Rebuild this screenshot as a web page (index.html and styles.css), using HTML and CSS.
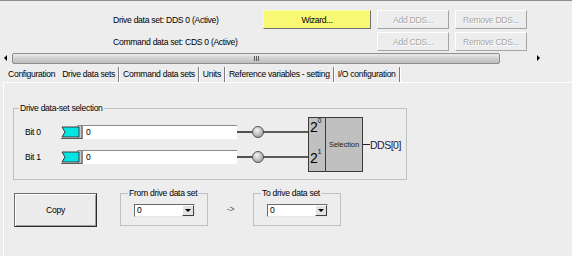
FILE: index.html
```html
<!DOCTYPE html>
<html lang="en">
<head>
<meta charset="UTF-8" />
<meta name="viewport" content="width=device-width, initial-scale=1" />
<title>Drive data sets</title>
<link rel="stylesheet" href="styles.css">
</head>
<body>
<div class="header">
  <div class="hdr-row">
    <span class="hdr-label">Drive data set: DDS 0 (Active)</span>
    <button class="btn wizard">Wizard...</button>
    <button class="btn" disabled>Add DDS...</button>
    <button class="btn" disabled>Remove DDS...</button>
  </div>
  <div class="hdr-row">
    <span class="hdr-label">Command data set: CDS 0 (Active)</span>
    <span></span>
    <button class="btn" disabled>Add CDS...</button>
    <button class="btn" disabled>Remove CDS...</button>
  </div>
</div>

<div class="hscroll">
  <span class="scroll-arrow left"></span>
  <div class="track"><div class="thumb"><span class="grip"></span></div></div>
  <span class="scroll-arrow right"></span>
</div>

<ul class="tabs">
  <li>Configuration</li>
  <li class="active">Drive data sets</li>
  <li>Command data sets</li>
  <li>Units</li>
  <li>Reference variables - setting</li>
  <li>I/O configuration</li>
</ul>

<div class="page">
  <fieldset class="group sel-group">
    <legend>Drive data-set selection</legend>
    <div class="sel-body">
      <div class="bits">
        <div class="bit">
          <span class="bit-label">Bit 0</span>
          <svg class="socket" viewBox="0 0 22 14">
            <rect x="18" y="0.5" width="3.5" height="13" fill="#c8c8c8" stroke="#8a8a8a" stroke-width="1"/>
            <polygon points="2,2 19,2 19,12 2,12 5,7" fill="#00e4e4" stroke="#3c3c3c" stroke-width="1"/>
            <line x1="1" y1="13.5" x2="22" y2="13.5" stroke="#5a5a5a" stroke-width="1"/>
          </svg>
          <span class="bit-value">0</span>
          <svg class="wire" viewBox="0 0 71 14">
            <defs>
              <radialGradient id="knob0" cx="0.4" cy="0.35" r="0.7">
                <stop offset="0" stop-color="#f4f4f4"/>
                <stop offset="1" stop-color="#9a9a9a"/>
              </radialGradient>
            </defs>
            <line x1="0" y1="7" x2="15" y2="7" stroke="#2a2a2a" stroke-width="1.6"/>
            <circle cx="21" cy="7" r="5.5" fill="url(#knob0)" stroke="#555" stroke-width="1"/>
            <line x1="26.5" y1="7" x2="71" y2="7" stroke="#2a2a2a" stroke-width="1.6"/>
          </svg>
        </div>
        <div class="bit">
          <span class="bit-label">Bit 1</span>
          <svg class="socket" viewBox="0 0 22 14">
            <rect x="18" y="0.5" width="3.5" height="13" fill="#c8c8c8" stroke="#8a8a8a" stroke-width="1"/>
            <polygon points="2,2 19,2 19,12 2,12 5,7" fill="#00e4e4" stroke="#3c3c3c" stroke-width="1"/>
            <line x1="1" y1="13.5" x2="22" y2="13.5" stroke="#5a5a5a" stroke-width="1"/>
          </svg>
          <span class="bit-value">0</span>
          <svg class="wire" viewBox="0 0 71 14">
            <line x1="0" y1="7" x2="15" y2="7" stroke="#2a2a2a" stroke-width="1.6"/>
            <circle cx="21" cy="7" r="5.5" fill="url(#knob0)" stroke="#555" stroke-width="1"/>
            <line x1="26.5" y1="7" x2="71" y2="7" stroke="#2a2a2a" stroke-width="1.6"/>
          </svg>
        </div>
      </div>
      <div class="mux">
        <div class="mux-in">
          <span class="pow">2<sup>0</sup></span>
          <span class="pow">2<sup>1</sup></span>
        </div>
        <div class="mux-sel">Selection</div>
      </div>
      <span class="out-wire"></span>
      <span class="out-label">DDS[0]</span>
    </div>
  </fieldset>

  <div class="copy-row">
    <button class="copy-btn">Copy</button>
    <fieldset class="group dd-group">
      <legend>From drive data set</legend>
      <div class="combo"><span class="combo-val">0</span><span class="combo-btn"></span></div>
    </fieldset>
    <span class="arrow-sep">-&gt;</span>
    <fieldset class="group dd-group">
      <legend>To drive data set</legend>
      <div class="combo"><span class="combo-val">0</span><span class="combo-btn"></span></div>
    </fieldset>
  </div>
</div>
</body>
</html>
```

FILE: styles.css
```css
html, body {
  margin: 0; padding: 0;
}
body {
  width: 572px; height: 256px; overflow: hidden; box-sizing: border-box;
  display: flex; flex-direction: column;
  border-top: 1px solid #8c8c8c; background: #ededed; color: #000;
  font-family: "Liberation Sans", Arial, sans-serif;
  font-size: 8.6px; letter-spacing: -0.3px;
}

/* header with data set info and buttons */
.header {
  padding: 9px 0 0 113px; display: flex; flex-direction: column; gap: 3px;
}
.hdr-row {
  display: grid; grid-template-columns: 144px 108px 72px 72px; column-gap: 6px; height: 19px;
}
.hdr-label {
  align-self: center; white-space: nowrap;
}
.btn {
  height: 19px; padding: 0; font: inherit; letter-spacing: inherit; background: transparent;
  border: 1px solid; border-color: #fff #a4a4a4 #a4a4a4 #fff;
  color: #a8a8a8; text-shadow: 1px 1px #fff;
}
.btn.wizard {
  background: #f8f872; color: #000; text-shadow: none;
  border-color: #fbfba8 #707070 #707070 #fbfba8;
}

/* horizontal scroll bar */
.hscroll {
  display: flex; align-items: center; width: 544px; height: 12px; margin-top: 1px;
}
.scroll-arrow {
  width: 11px; height: 12px; display: flex; align-items: center; justify-content: center;
}
.scroll-arrow.left::before {
  content: ""; border: 3px solid transparent; border-right: 3px solid #000; border-left: 0;
}
.scroll-arrow.right::before {
  content: ""; border: 3px solid transparent; border-left: 3px solid #000; border-right: 0;
}
.track {
  flex: 1; display: flex;
}
.thumb {
  margin-left: 1px; width: 488px; height: 11px; box-sizing: border-box;
  border: 1px solid #8e8e8e; border-radius: 2px;
  background: linear-gradient(#ececec, #d2d2d2 45%, #bebebe);
  display: flex; align-items: center; justify-content: center;
}
.grip {
  width: 5px; height: 5px;
  background: repeating-linear-gradient(90deg, #5a5a5a 0 1px, transparent 1px 2px);
}

/* tab strip */
.tabs {
  list-style: none; margin: 3px 0 0; padding: 0 0 0 4px; display: flex; height: 15px; flex: none;
}
.tabs li {
  padding: 0 3px 0 4px; line-height: 15px; white-space: nowrap;
  border-right: 1px solid #7c7c7c; box-shadow: 1px 0 #fff;
}
.tabs li:first-child {
  border-right: none; box-shadow: none;
}

.page {
  flex: 1; min-height: 0;
  margin-left: 3px; border-top: 1px solid #fff; border-left: 1px solid #fff;
}

/* group boxes */
.group {
  margin: 0; border: 1px solid #c0c0c0; min-inline-size: 0;
}
.group legend {
  padding: 0 1px; line-height: 11px; margin-left: -6px; white-space: nowrap;
}
.sel-group {
  margin: 20px 0 0 9px; width: 394px; box-sizing: border-box; padding: 3px 0 7px 11px;
}
.sel-body {
  display: flex; align-items: center;
}
.bits {
  display: flex; flex-direction: column; gap: 11px;
}
.bit {
  display: flex; align-items: center; height: 14px;
}
.bit-label {
  width: 35px;
}
.socket {
  width: 22px; height: 14px; display: block;
}
.bit-value {
  width: 155px; height: 14px; box-sizing: border-box; background: #fff;
  border-top: 1px solid #8c8c8c; border-left: 1px solid #8c8c8c;
  padding-left: 3px; line-height: 13px;
}
.wire {
  width: 71px; height: 14px; display: block;
}

/* selection block */
.mux {
  display: flex; width: 55px; height: 55px; box-sizing: border-box;
  border: 1px solid #3a3a3a; background: #c0c0c0;
}
.mux-in {
  width: 16px; border-right: 1px solid #3a3a3a;
  display: flex; flex-direction: column; gap: 17px; padding-top: 2px;
}
.pow {
  font-size: 14px; line-height: 14px; letter-spacing: 0;
  padding-left: 1px; white-space: nowrap;
}
.pow sup {
  font-size: 6.5px; line-height: 0; vertical-align: 9px;
}
.mux-sel {
  flex: 1; display: flex; align-items: center; justify-content: center;
  font-size: 7.5px; letter-spacing: -0.1px; color: #222;
}
.out-wire {
  width: 7px; height: 1px; background: #222;
}
.out-label {
  font-size: 10.5px; letter-spacing: -0.5px; color: #1c1c3c; white-space: nowrap;
}

/* copy row */
.copy-row {
  display: flex; align-items: flex-start; margin: 13px 0 0 10px;
}
.copy-btn {
  width: 83px; height: 34px; margin-right: 23px; padding: 0;
  font: inherit; letter-spacing: inherit; color: #000;
  background: #ececec; border: 1px solid; border-color: #6c6c6c #2c2c2c #2c2c2c #6c6c6c;
  box-shadow: inset 1px 1px #fff, inset -1px -1px #a0a0a0;
}
.dd-group {
  margin-top: -5px; width: 88px; box-sizing: border-box; padding: 5px 11px 8px 13px;
}
.combo {
  display: flex; width: 61px; height: 13px; box-sizing: border-box; background: #fff;
  border: 1px solid; border-color: #6a6a6a #e6e6e6 #e6e6e6 #6a6a6a;
}
.combo-val {
  flex: 1; padding-left: 2px; line-height: 11px;
}
.combo-btn {
  width: 12px; box-sizing: border-box; background: #e2e2e2;
  border: 1px solid; border-color: #fff #404040 #404040 #fff;
  display: flex; align-items: center; justify-content: center;
}
.combo-btn::before {
  content: ""; border: 3px solid transparent; border-top: 3px solid #000; border-bottom: 0;
}
.arrow-sep {
  width: 45px; text-align: center; margin-top: 11px; line-height: 11px; color: #555;
}
```
